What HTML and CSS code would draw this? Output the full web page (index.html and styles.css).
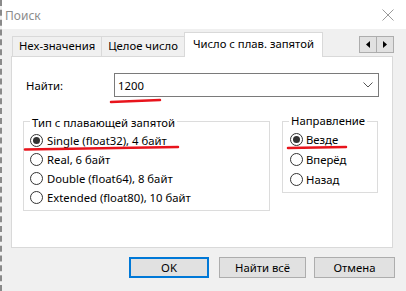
FILE: index.html
```html
<!DOCTYPE html>
<html lang="ru">
<head>
    <meta charset="UTF-8">
    <title>Поиск</title>
    <link rel="stylesheet" href="styles.css">
</head>
<body>
    <div class="window">
        <div class="titlebar">
            <span class="title">Поиск</span>
            <svg class="close" width="12" height="12" viewBox="0 0 12 12">
                <path d="M0.5 0.5 L11.5 11.5 M11.5 0.5 L0.5 11.5" stroke="#9a9a9a" stroke-width="1" fill="none"/>
            </svg>
        </div>

        <div class="tabstrip">
            <div class="tab">Hex-значения</div>
            <div class="tab">Целое число</div>
            <div class="tab active">Число с плав. запятой</div>
            <div class="scroller">
                <div class="arrow"><svg width="4" height="7" viewBox="0 0 4 7"><path d="M4 0 L0 3.5 L4 7 Z" fill="#000"/></svg></div>
                <div class="arrow"><svg width="4" height="7" viewBox="0 0 4 7"><path d="M0 0 L4 3.5 L0 7 Z" fill="#000"/></svg></div>
            </div>
        </div>

        <div class="panel">
            <div class="find-row">
                <label class="find-label">Найти:</label>
                <div class="combo">
                    <span class="combo-text">1200</span>
                    <svg width="10" height="6" viewBox="0 0 10 6"><path d="M0.5 0.5 L5 5 L9.5 0.5" stroke="#555" stroke-width="1" fill="none"/></svg>
                </div>
            </div>

            <div class="groups">
                <div class="group type-group">
                    <span class="legend">Тип с плавающей запятой</span>
                    <div class="radio checked"><span class="dot"></span>Single (float32), 4 байт</div>
                    <div class="radio"><span class="dot"></span>Real, 6 байт</div>
                    <div class="radio"><span class="dot"></span>Double (float64), 8 байт</div>
                    <div class="radio"><span class="dot"></span>Extended (float80), 10 байт</div>
                </div>
                <div class="group dir-group">
                    <span class="legend">Направление</span>
                    <div class="radio checked"><span class="dot"></span>Везде</div>
                    <div class="radio"><span class="dot"></span>Вперёд</div>
                    <div class="radio"><span class="dot"></span>Назад</div>
                </div>
            </div>
        </div>

        <div class="buttons">
            <button class="btn default">OK</button>
            <button class="btn find-all">Найти всё</button>
            <button class="btn cancel">Отмена</button>
        </div>
    </div>

    <!-- red marker strokes drawn over the dialog -->
    <svg class="marks" width="406" height="291" viewBox="0 0 406 291">
        <path d="M111 102 L160 100" stroke="#e8141c" stroke-width="2.5" stroke-linecap="round" fill="none"/>
        <path d="M25 149.5 L178 147" stroke="#e8141c" stroke-width="2.5" stroke-linecap="round" fill="none"/>
        <path d="M288 148 L346 147" stroke="#e8141c" stroke-width="2.5" stroke-linecap="round" fill="none"/>
    </svg>
</body>
</html>
```

FILE: styles.css
```css
body{
    margin: 0;
    width: 406px;
    height: 291px;
    overflow: hidden;
    position: relative;
    background-color: #f0f0f0;
    font-family: "Noto Sans", sans-serif;
    font-size: 11.3px;
    color: #000;
}
.window{
    height: 291px;
    border-left: 2px dashed #8a8a8a;
    box-sizing: border-box;
}
.titlebar{
    height: 29px;
    box-sizing: border-box;
    background-color: #fff;
    display: flex;
    align-items: center;
    justify-content: space-between;
    padding: 1px 12px 0 3px;
}
.title{
    color: #8c8c8c;
    font-size: 12px;
}
.tabstrip{
    margin-top: 3px;
    height: 24px;
    box-sizing: border-box;
    padding-left: 10px;
    display: flex;
    align-items: flex-end;
    position: relative;
    z-index: 1;
}
.tab{
    height: 20px;
    box-sizing: border-box;
    line-height: 18px;
    padding: 0 6px;
    border: 1px solid #d9d9d9;
    border-bottom: none;
    border-right: none;
    background-color: #f0f0f0;
    white-space: nowrap;
}
.tab.active{
    height: 25px;
    line-height: 22px;
    background-color: #fff;
    border-right: 1px solid #d9d9d9;
    margin-bottom: -1px;
    padding: 0 8px;
}
.scroller{
    margin-left: auto;
    margin-right: 12px;
    align-self: center;
    display: flex;
}
.arrow{
    width: 16px;
    height: 15px;
    border: 1px solid #adadad;
    background-color: #e1e1e1;
    display: flex;
    align-items: center;
    justify-content: center;
}
.arrow + .arrow{
    margin-left: -1px;
}
.panel{
    margin-left: 9px;
    width: 382px;
    height: 192px;
    box-sizing: border-box;
    background-color: #fff;
    border: 1px solid #d9d9d9;
}
.find-row{
    margin-top: 16px;
    padding-left: 14px;
    display: flex;
    align-items: center;
}
.find-label{
    width: 88px;
}
.combo{
    width: 265px;
    height: 24px;
    box-sizing: border-box;
    border: 1px solid #7a7a7a;
    display: flex;
    align-items: center;
    justify-content: space-between;
    padding: 0 5px 0 3px;
}
.groups{
    display: flex;
    align-items: flex-start;
    gap: 12px;
    margin-top: 24px;
    padding-left: 11px;
}
.group{
    border: 1px solid #dcdcdc;
    box-sizing: border-box;
    display: flex;
    flex-direction: column;
}
.legend{
    align-self: flex-start;
    margin: -9px 0 0 0;
    padding: 0 2px;
    background-color: #fff;
    line-height: 16px;
}
.type-group{
    width: 247px;
    height: 90px;
    padding: 2px 0 0 6px;
}
.dir-group{
    width: 96px;
    height: 72px;
    padding: 0 0 0 7px;
}
.dir-group .legend{
    margin-left: -1px;
}
.radio{
    display: flex;
    align-items: center;
    height: 19px;
    white-space: nowrap;
}
.dir-group .radio{
    height: 20px;
}
.dot{
    width: 13px;
    height: 13px;
    box-sizing: border-box;
    border: 1px solid #333;
    border-radius: 50%;
    margin-right: 4px;
    display: flex;
    align-items: center;
    justify-content: center;
}
.dir-group .dot{
    margin-right: 3px;
}
.radio.checked .dot::after{
    content: "";
    width: 7px;
    height: 7px;
    border-radius: 50%;
    background-color: #333;
}
.buttons{
    display: flex;
    justify-content: flex-end;
    gap: 9px;
    margin-top: 9px;
    padding-right: 11px;
}
.btn{
    height: 21px;
    box-sizing: border-box;
    border: 1px solid #adadad;
    background-color: #e1e1e1;
    font-family: "Noto Sans", sans-serif;
    font-size: 11.3px;
    color: #000;
    padding: 0;
}
.btn.default{
    width: 80px;
    border: 2px solid #0078d7;
    margin-right: 1px;
}
.btn.find-all{
    width: 87px;
    margin-right: -1px;
}
.btn.cancel{
    width: 81px;
}
.marks{
    position: absolute;
    left: 0;
    top: 0;
    pointer-events: none;
}
```
